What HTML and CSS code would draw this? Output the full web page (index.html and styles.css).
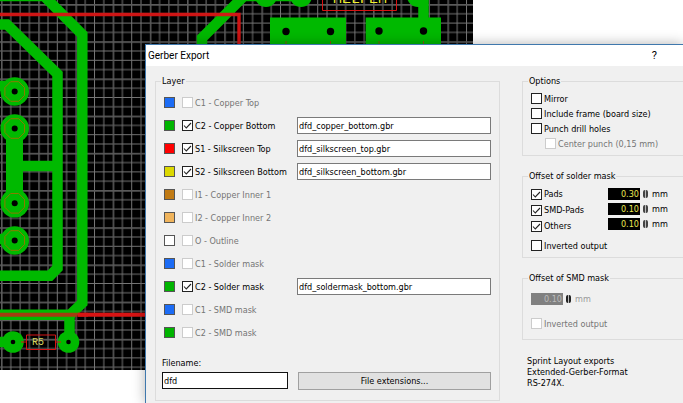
FILE: index.html
```html
<!DOCTYPE html>
<html lang="en">
<head>
    <meta charset="UTF-8">
    <meta name="viewport" content="width=device-width, initial-scale=1.0">
    <title>Gerber Export</title>
    <link rel="stylesheet" href="styles.css">
</head>
<body>
    <!-- Board -->
    <svg class="board" width="473" height="370" viewBox="0 0 473 370" aria-hidden="true">
        <defs>
            <pattern id="grid" x="1" y="4" width="37.2" height="37.2" patternUnits="userSpaceOnUse">
                <path d="M9.8 0V37.2M19.1 0V37.2M28.4 0V37.2M0 9.8H37.2M0 19.1H37.2M0 28.4H37.2" stroke="#767676" stroke-width="1"/>
                <path d="M.8 0V37.2M0 .8H37.2" stroke="#5a5a5a" stroke-width="1.6"/>
            </pattern>
        </defs>
        <rect width="473" height="370" fill="#000"/>
        <rect width="473" height="370" fill="url(#grid)"/>

        <!-- Copper tracks -->
        <g fill="none" stroke="#00b900" stroke-width="10.5">
            <path d="M0 24.5H7L57.5 74V268L50 275.7H0"/>
            <path d="M0 -4H44L82.3 34.5V303L70 314.7H0"/>
            <path d="M69.5 314V342M0 342H13M0 86H12M0 239H12M20 166H57"/>
            <path d="M202 50V38L244 -4H310M423.5 0V20"/>
            <path d="M14.5 129V203" stroke-width="17"/>
        </g>
        <g fill="#00b900">
            <circle cx="14.7" cy="91.5" r="14.3"/>
            <circle cx="14.7" cy="128.5" r="14.3"/>
            <circle cx="14.7" cy="203.3" r="14.3"/>
            <circle cx="14.7" cy="240.5" r="14.3"/>
            <circle cx="13" cy="342" r="10.8"/>
            <circle cx="68.5" cy="342" r="10.8"/>
            <circle cx="266" cy="-4" r="11"/>
            <circle cx="301" cy="-4" r="11"/>
            <circle cx="418" cy="-4" r="11"/>
            <path d="M270 17.5H346V46H270zM365.7 17.5H441V46H365.7z"/>
        </g>
        <g fill="none" stroke="#8a7a00">
            <path id="oct" d="M10.7 81.7H18.7L24.5 87.5V95.5L18.7 101.3H10.7L4.9 95.5V87.5z"/>
            <use href="#oct" y="37"/>
            <use href="#oct" y="111.8"/>
            <use href="#oct" y="149"/>
        </g>
        <g fill="#000">
            <circle cx="14.7" cy="91.5" r="3"/>
            <circle cx="14.7" cy="128.5" r="3"/>
            <circle cx="14.7" cy="203.3" r="3"/>
            <circle cx="14.7" cy="240.5" r="3"/>
            <circle cx="13" cy="342" r="2.3"/>
            <circle cx="68.5" cy="342" r="2.3"/>
            <circle cx="286" cy="31.5" r="3.7"/>
            <circle cx="330.5" cy="31.5" r="3.7"/>
            <circle cx="379" cy="31" r="3.7"/>
            <circle cx="423.5" cy="31" r="3.7"/>
        </g>

        <!-- Silkscreen -->
        <g fill="none" stroke="#d81414">
            <path d="M0 14.5H239V46" stroke-width="3.4" stroke-opacity=".95"/>
            <path d="M0 314.7H88" stroke-width="4" stroke-opacity=".75"/>
            <path d="M78 314.7H146" stroke-width="4"/>
            <path d="M26.5 335H55.5V349.5H26.5zM21 342H26M56 342H61M322.5 0V10.5H396.5V0"/>
            <path d="M286 41V45M330.5 41V45M379 41V45M423.5 41V45" stroke-opacity=".6"/>
        </g>
        <text class="part" x="32" y="345">R5</text>
        <text class="part part-name" x="333" y="3">MELPEM</text>
    </svg>

    <!-- Dialog -->
    <form class="dialog">
        <header class="title-bar">
            <h1>Gerber Export</h1>
            <button type="button" class="help" aria-label="Help">?</button>
        </header>

        <div class="content">
            <fieldset class="layers">
                <legend>Layer</legend>
                <ul class="layer-list">
                    <li>
                        <span class="swatch blue"></span>
                        <label class="check"><input type="checkbox" disabled>C1 - Copper Top</label>
                    </li>
                    <li>
                        <span class="swatch green"></span>
                        <label class="check"><input type="checkbox" checked>C2 - Copper Bottom</label>
                        <input class="field" type="text" aria-label="C2 copper bottom file" value="dfd_copper_bottom.gbr">
                    </li>
                    <li>
                        <span class="swatch red"></span>
                        <label class="check"><input type="checkbox" checked>S1 - Silkscreen Top</label>
                        <input class="field" type="text" aria-label="S1 silkscreen top file" value="dfd_silkscreen_top.gbr">
                    </li>
                    <li>
                        <span class="swatch yellow"></span>
                        <label class="check"><input type="checkbox" checked>S2 - Silkscreen Bottom</label>
                        <input class="field" type="text" aria-label="S2 silkscreen bottom file" value="dfd_silkscreen_bottom.gbr">
                    </li>
                    <li>
                        <span class="swatch brown"></span>
                        <label class="check"><input type="checkbox" disabled>I1 - Copper Inner 1</label>
                    </li>
                    <li>
                        <span class="swatch orange"></span>
                        <label class="check"><input type="checkbox" disabled>I2 - Copper Inner 2</label>
                    </li>
                    <li>
                        <span class="swatch white"></span>
                        <label class="check"><input type="checkbox" disabled>O - Outline</label>
                    </li>
                    <li>
                        <span class="swatch blue"></span>
                        <label class="check"><input type="checkbox" disabled>C1 - Solder mask</label>
                    </li>
                    <li>
                        <span class="swatch green"></span>
                        <label class="check"><input type="checkbox" checked>C2 - Solder mask</label>
                        <input class="field" type="text" aria-label="C2 solder mask file" value="dfd_soldermask_bottom.gbr">
                    </li>
                    <li>
                        <span class="swatch blue"></span>
                        <label class="check"><input type="checkbox" disabled>C1 - SMD mask</label>
                    </li>
                    <li>
                        <span class="swatch green"></span>
                        <label class="check"><input type="checkbox" disabled>C2 - SMD mask</label>
                    </li>
                </ul>
                <div class="file-row">
                    <label for="filename">Filename:</label>
                    <input class="field strong" type="text" id="filename" value="dfd">
                    <button type="button" class="button">File extensions...</button>
                </div>
            </fieldset>

            <div class="side">
                <fieldset>
                    <legend>Options</legend>
                    <label class="check"><input type="checkbox">Mirror</label>
                    <label class="check"><input type="checkbox">Include frame (board size)</label>
                    <label class="check"><input type="checkbox">Punch drill holes</label>
                    <label class="check indent"><input type="checkbox" disabled>Center punch (0,15 mm)</label>
                </fieldset>

                <fieldset>
                    <legend>Offset of solder mask</legend>
                    <div class="offsets">
                        <div class="offset-names">
                            <label class="check"><input type="checkbox" checked>Pads</label>
                            <label class="check"><input type="checkbox" checked>SMD-Pads</label>
                            <label class="check"><input type="checkbox" checked>Others</label>
                        </div>
                        <div>
                            <div class="amount"><input type="text" aria-label="Pads offset" value="0.30"><span class="spin"></span>mm</div>
                            <div class="amount"><input type="text" aria-label="SMD-Pads offset" value="0.10"><span class="spin"></span>mm</div>
                            <div class="amount"><input type="text" aria-label="Others offset" value="0.10"><span class="spin"></span>mm</div>
                        </div>
                    </div>
                    <label class="check inverted"><input type="checkbox">Inverted output</label>
                </fieldset>

                <fieldset class="smd">
                    <legend>Offset of SMD mask</legend>
                    <div class="amount off"><input type="text" aria-label="SMD mask offset" value="0.10" disabled><span class="spin"></span>mm</div>
                    <label class="check inverted"><input type="checkbox" disabled>Inverted output</label>
                </fieldset>

                <p class="note">Sprint Layout exports<br>Extended-Gerber-Format<br>RS-274X.</p>
            </div>
        </div>
    </form>
</body>
</html>
```

FILE: styles.css
```css
* {
    box-sizing: border-box;
}

body {
    margin: 0;
    min-height: 100vh;
    overflow: hidden;
    background: white;
    color: #000;
    font-family: "DejaVu Sans Condensed", "DejaVu Sans", sans-serif;
    font-size: 9px;
    line-height: 12px;
}

input,
button {
    font: inherit;
    color: inherit;
    border-radius: 0;
    margin: 0;
}

/* Board */
.board {
    display: block;
}

.part {
    fill: #d8d860;
    font-family: "Liberation Mono", monospace;
    font-size: 10px;
}

.part-name {
    font-size: 15px;
    fill: #f0f030;
}

/* Dialog */
.dialog {
    position: absolute;
    top: 44px;
    left: 145px;
    right: 0;
    min-height: calc(100vh - 44px);
    background: #f0f0f0;
    border: solid #3f78ad;
    border-width: 1px 0 0 1px;
    box-shadow: 0 0 12px rgba(0, 0, 0, 0.3);
}

.title-bar {
    display: flex;
    align-items: center;
    justify-content: space-between;
    height: 21px;
    padding: 0 26px 0 2px;
    background: white;
}

.title-bar h1 {
    margin: 0;
    font-family: Roboto, sans-serif;
    font-size: 10px;
    font-weight: normal;
}

.help {
    padding: 0;
    border: none;
    background: none;
    font-family: Roboto, sans-serif;
    font-size: 11px;
}

.content {
    display: grid;
    grid-template-columns: 345fr 161fr;
    gap: 22px;
    padding: 9px 0 0 9px;
}

fieldset {
    min-width: 0;
    margin: 0;
    padding: 4px 8px;
    border: 1px solid #dcdcdc;
}

legend {
    margin-left: -3px;
    padding: 0 1px;
    line-height: 12px;
}

.check {
    display: flex;
    align-items: center;
    gap: 2px;
    height: 15px;
    white-space: nowrap;
}

.check input {
    appearance: none;
    flex: none;
    width: 11px;
    height: 11px;
    border: 1px solid #222;
    background: white;
}

.check input:checked {
    background: white url("data:image/svg+xml,%3Csvg xmlns='http://www.w3.org/2000/svg' viewBox='0 0 9 9'%3E%3Cpath d='M1 4.5L3.3 7L8 2' fill='none' stroke='%23222' stroke-width='1.1'/%3E%3C/svg%3E");
}

.check input:disabled {
    border-color: #ccc;
}

.check:has(input:disabled) {
    color: #757575;
}

.field {
    width: 100%;
    min-width: 0;
    height: 17px;
    padding: 0 1px;
    border: 1px solid #7a7a7a;
    background: white;
}

.field.strong {
    border-color: #111;
}

/* Layers */
.layer-list {
    margin: 0;
    padding: 0;
    list-style: none;
}

.layer-list li {
    display: grid;
    grid-template-columns: 11px 108px 1fr;
    column-gap: 7px;
    align-items: center;
    height: 23px;
}

.swatch {
    width: 11px;
    height: 11px;
    border: 1px solid #555;
}

.blue {
    background: #1c6cf5;
}

.green {
    background: #00b400;
}

.red {
    background: #ff0000;
}

.yellow {
    background: #dcd800;
}

.brown {
    background: #c07a14;
}

.orange {
    background: #f0b45c;
}

.white {
    background: white;
}

.file-row {
    display: grid;
    grid-template-columns: 126px 1fr;
    gap: 3px 10px;
    margin: 13px 0 6px -2px;
}

.file-row label {
    grid-column: 1 / 3;
}

.button {
    height: 18px;
    padding: 0;
    border: 1px solid #a0a0a0;
    background: #e1e1e1;
}

/* Options */
.side {
    display: flex;
    flex-direction: column;
    gap: 14px;
}

.side fieldset {
    border-right: none;
    padding-right: 0;
}

.indent {
    margin-left: 14px;
}

.offsets {
    display: flex;
}

.offset-names {
    width: 77px;
}

.offset-names .check {
    height: 16px;
}

.inverted {
    margin-top: 4px;
}

.amount {
    display: flex;
    align-items: center;
    height: 15px;
}

.amount input {
    width: 32px;
    height: 12px;
    padding: 0 1px;
    border: none;
    background: black;
    color: #e8e850;
    text-align: right;
}

.spin {
    width: 5px;
    height: 8px;
    margin: 0 4px 0 3px;
    border: solid #444;
    border-width: 0 2px;
    border-radius: 2px;
    background: #bbb;
}

.amount.off {
    margin-top: 3px;
    color: #999;
}

.amount.off input {
    background: #808080;
    color: #bbb;
}

.amount.off .spin {
    border-color: #222;
}

.side .smd {
    padding-bottom: 8px;
}

.smd .inverted {
    margin-top: 10px;
}

.note {
    margin: 2px 0 0 5px;
    line-height: 11px;
}
```
